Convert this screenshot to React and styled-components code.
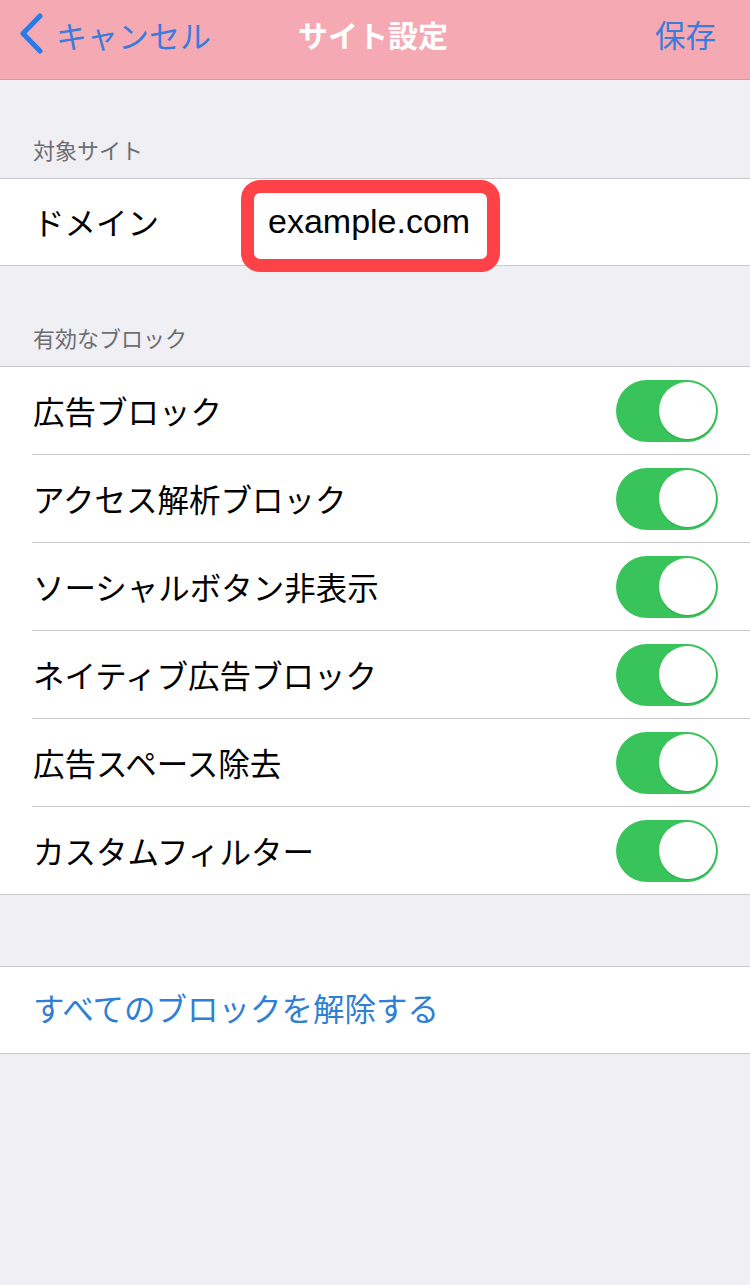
import React from "react";
import styled, { createGlobalStyle } from "styled-components";

const Global = createGlobalStyle`
  html, body { margin: 0; padding: 0; background: #efeff4; }
  body { font-family: "Noto Sans CJK JP", "Noto Sans", sans-serif; -webkit-font-smoothing: antialiased; }
  * { box-sizing: border-box; }
`;

const Page = styled.div`
  width: 750px;
  min-height: 1285px;
  background: #efeff4;
  display: flex;
  flex-direction: column;
`;

const NavBar = styled.div`
  height: 80px;
  background: #f5aab3;
  border-bottom: 1px solid #b9a4a8;
  display: grid;
  grid-template-columns: 1fr auto 1fr;
  align-items: center;
  padding: 0 22px 11px 18px;
`;

const BackButton = styled.div`
  display: flex;
  align-items: center;
  gap: 12px;
  color: #3a7bdc;
  font-size: 31px;
  line-height: 1;
  svg { display: block; }
`;

const Title = styled.div`
  color: #ffffff;
  font-size: 30px;
  font-weight: 700;
  line-height: 1;
`;

const SaveButton = styled.div`
  justify-self: end;
  margin-right: 12px;
  color: #3a7bdc;
  font-size: 30.5px;
  line-height: 1;
`;

const SectionHeader = styled.div`
  height: ${(p) => p.$h}px;
  display: flex;
  align-items: flex-end;
  padding: 0 33px 16px;
  color: #6d6d72;
  font-size: 22px;
  line-height: 26px;
`;

const Spacer = styled.div`
  height: ${(p) => p.$h}px;
`;

const Group = styled.div`
  background: #ffffff;
  border-top: 1px solid #c8c7cc;
  border-bottom: 1px solid #c8c7cc;
`;

const Row = styled.div`
  position: relative;
  height: ${(p) => p.$h || 87}px;
  display: flex;
  align-items: center;
  padding: 0 32px 0 33px;
  & + & {
    height: ${(p) => (p.$h || 87) + 1}px;
    padding-top: 1px;
  }
  & + &::before {
    content: "";
    position: absolute;
    left: 32px;
    right: 0;
    top: 0;
    height: 1px;
    background: #c8c7cc;
  }
`;

const Label = styled.div`
  flex: ${(p) => (p.$fixed ? "0 0 235px" : "1")};
  font-size: 31.5px;
  line-height: 1.2;
  color: ${(p) => (p.$link ? "#2f7fd6" : "#000000")};
  padding-bottom: ${(p) => (p.$link ? "4px" : "0")};
`;

const Value = styled.div`
  font-family: "Liberation Sans", Arial, sans-serif;
  font-size: 34px;
  color: #000;
  padding-bottom: 2px;
`;

const Annotation = styled.div`
  position: absolute;
  left: 241px;
  top: 1px;
  width: 259px;
  height: 92px;
  border: 13px solid #fe4248;
  border-radius: 19px;
  pointer-events: none;
`;

const Track = styled.div`
  width: 102px;
  height: 62px;
  border-radius: 31px;
  background: #38c45a;
  display: flex;
  align-items: center;
  justify-content: flex-end;
  padding: 0 2.5px;
`;

const Knob = styled.div`
  width: 57px;
  height: 57px;
  border-radius: 50%;
  background: #ffffff;
  box-shadow: 0 1px 2px rgba(0, 0, 0, 0.12);
`;

const Toggle = () => (
  <Track>
    <Knob />
  </Track>
);

const blocks = [
  "広告ブロック",
  "アクセス解析ブロック",
  "ソーシャルボタン非表示",
  "ネイティブ広告ブロック",
  "広告スペース除去",
  "カスタムフィルター",
];

export default function App() {
  return (
    <Page>
      <Global />
      <NavBar>
        <BackButton>
          <svg width="26" height="42" viewBox="0 0 26 42">
            <path d="M22 3 L5 20.5 L22 38" fill="none" stroke="#2b7be6" strokeWidth="5" strokeLinecap="round" strokeLinejoin="round" />
          </svg>
          <span>キャンセル</span>
        </BackButton>
        <Title>サイト設定</Title>
        <SaveButton>保存</SaveButton>
      </NavBar>

      <SectionHeader $h={98}>対象サイト</SectionHeader>
      <Group>
        <Row $h={86}>
          <Label $fixed>ドメイン</Label>
          <Value>example.com</Value>
          <Annotation />
        </Row>
      </Group>

      <SectionHeader $h={100}>有効なブロック</SectionHeader>
      <Group>
        {blocks.map((b) => (
          <Row key={b}>
            <Label>{b}</Label>
            <Toggle />
          </Row>
        ))}
      </Group>

      <Spacer $h={71} />
      <Group>
        <Row $h={86}>
          <Label $link>すべてのブロックを解除する</Label>
        </Row>
      </Group>
    </Page>
  );
}
